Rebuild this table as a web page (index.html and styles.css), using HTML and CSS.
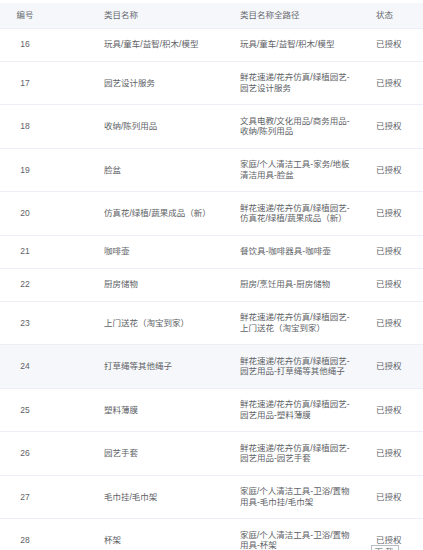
FILE: index.html
```html
<!DOCTYPE html>
<html lang="zh-CN">
<head>
<meta charset="utf-8">
<link rel="stylesheet" href="styles.css">
</head>
<body>
<div class="page">
  <table class="grid">
    <colgroup>
      <col class="c-no"><col class="c-name"><col class="c-path"><col class="c-state">
    </colgroup>
    <thead>
      <tr><th class="no">编号</th><th class="name">类目名称</th><th class="path">类目名称全路径</th><th class="state">状态</th></tr>
    </thead>
    <tbody>
      <tr><td class="no">16</td><td class="name">玩具/童车/益智/积木/模型</td><td class="path">玩具/童车/益智/积木/模型</td><td class="state">已授权</td></tr>
      <tr><td class="no">17</td><td class="name">园艺设计服务</td><td class="path">鲜花速递/花卉仿真/绿植园艺-园艺设计服务</td><td class="state">已授权</td></tr>
      <tr><td class="no">18</td><td class="name">收纳/陈列用品</td><td class="path">文具电教/文化用品/商务用品-收纳/陈列用品</td><td class="state">已授权</td></tr>
      <tr><td class="no">19</td><td class="name">脸盆</td><td class="path">家庭/个人清洁工具-家务/地板清洁用具-脸盆</td><td class="state">已授权</td></tr>
      <tr><td class="no">20</td><td class="name">仿真花/绿植/蔬果成品（新）</td><td class="path">鲜花速递/花卉仿真/绿植园艺-仿真花/绿植/蔬果成品（新）</td><td class="state">已授权</td></tr>
      <tr><td class="no">21</td><td class="name">咖啡壶</td><td class="path">餐饮具-咖啡器具-咖啡壶</td><td class="state">已授权</td></tr>
      <tr><td class="no">22</td><td class="name">厨房储物</td><td class="path">厨房/烹饪用具-厨房储物</td><td class="state">已授权</td></tr>
      <tr><td class="no">23</td><td class="name">上门送花（淘宝到家）</td><td class="path">鲜花速递/花卉仿真/绿植园艺-上门送花（淘宝到家）</td><td class="state">已授权</td></tr>
      <tr class="hover"><td class="no">24</td><td class="name">打草绳等其他绳子</td><td class="path">鲜花速递/花卉仿真/绿植园艺-园艺用品-打草绳等其他绳子</td><td class="state">已授权</td></tr>
      <tr><td class="no">25</td><td class="name">塑料薄膜</td><td class="path">鲜花速递/花卉仿真/绿植园艺-园艺用品-塑料薄膜</td><td class="state">已授权</td></tr>
      <tr><td class="no">26</td><td class="name">园艺手套</td><td class="path">鲜花速递/花卉仿真/绿植园艺-园艺用品-园艺手套</td><td class="state">已授权</td></tr>
      <tr><td class="no">27</td><td class="name">毛巾挂/毛巾架</td><td class="path">家庭/个人清洁工具-卫浴/置物用具-毛巾挂/毛巾架</td><td class="state">已授权</td></tr>
      <tr><td class="no">28</td><td class="name">杯架</td><td class="path">家庭/个人清洁工具-卫浴/置物用具-杯架</td><td class="state">已授权</td></tr>
    </tbody>
  </table>
  <div class="tip">下载</div>
</div>
</body>
</html>
```
FILE: styles.css
```css
html, body {
  margin: 0;
  padding: 0;
  background: #ffffff;
  overflow: hidden;
}
.page {
  position: relative;
  width: 423px;
  height: 550px;
  padding-top: 3px;
  box-sizing: border-box;
  overflow: hidden;
  font-family: "Liberation Sans", "Noto Sans CJK SC", sans-serif;
  font-size: 8.5px;
  color: #606266;
}
.grid {
  width: 423px;
  border-collapse: collapse;
  table-layout: fixed;
}
.c-no { width: 50px; }
.c-name { width: 180px; }
.c-path { width: 135px; }
.c-state { width: 58px; }
.grid th, .grid td {
  line-height: 10.5px;
  text-align: left;
  vertical-align: middle;
  border-bottom: 1px solid #ebeef5;
  word-break: break-all;
}
.grid th {
  background: #f5f7fa;
  font-weight: normal;
  color: #676a70;
  padding: 7px 0;
}
.grid td {
  padding: 10.75px 0;
}
.grid .no { text-align: center; }
.grid .name { padding-left: 54px; padding-right: 4px; }
.grid .path { padding-left: 10px; padding-right: 11px; }
.grid .state { padding-left: 11px; }
.grid tr.hover td { background: #f5f7fa; }
.tip {
  position: absolute;
  left: 371px;
  top: 545px;
  width: 28px;
  height: 14px;
  box-sizing: border-box;
  border: 1px solid #b8bcc4;
  background: #ffffff;
  font-size: 8.5px;
  line-height: 12px;
  text-align: center;
  color: #606266;
  letter-spacing: 2px;
}
```
